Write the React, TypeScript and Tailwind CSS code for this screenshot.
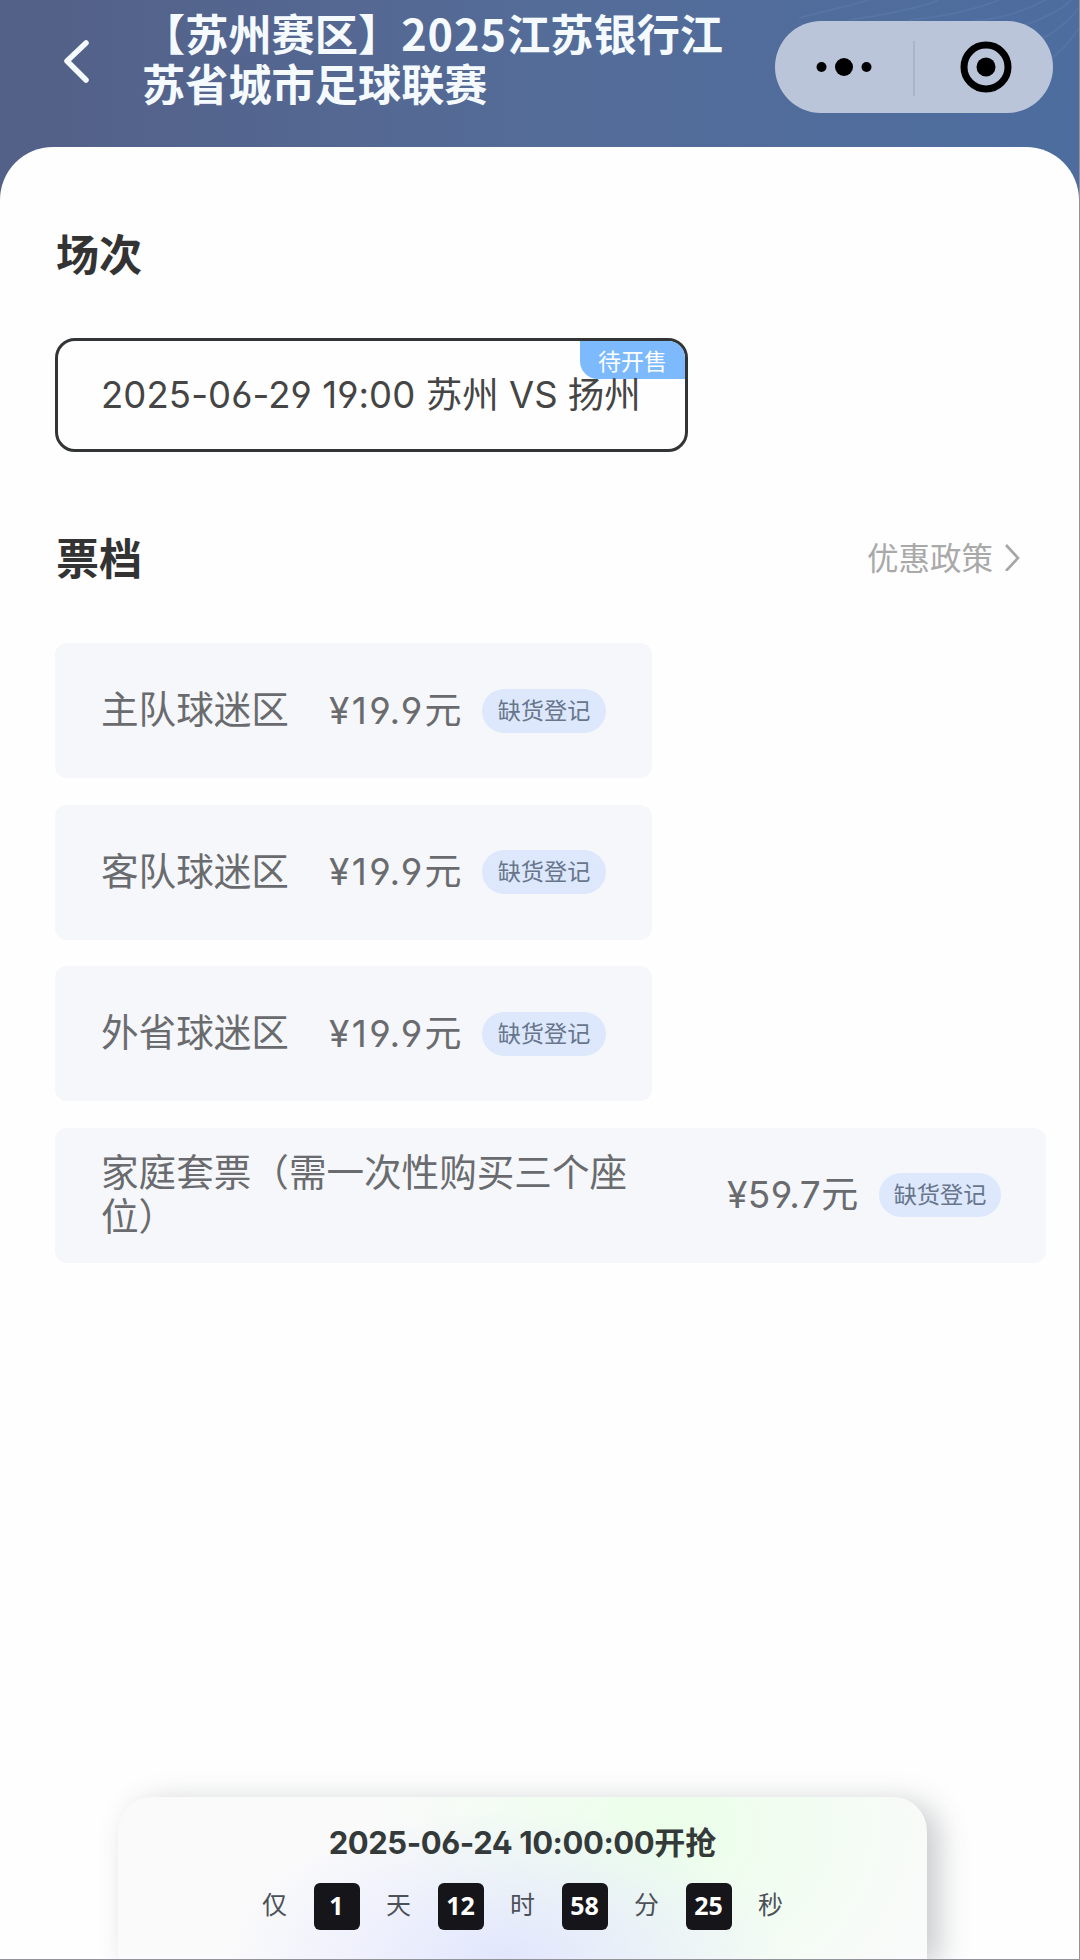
import React, { useState } from 'react';

interface Ticket {
  id: number;
  name: string;
  price: string;
  wide?: boolean;
}

const tickets: Ticket[] = [
  { id: 1, name: '主队球迷区', price: '19.9' },
  { id: 2, name: '客队球迷区', price: '19.9' },
  { id: 3, name: '外省球迷区', price: '19.9' },
  { id: 4, name: '家庭套票（需一次性购买三个座位）', price: '59.7', wide: true },
];

const countdown = [
  { value: '1', unit: '天' },
  { value: '12', unit: '时' },
  { value: '58', unit: '分' },
  { value: '25', unit: '秒' },
];

const Header = () => (
  <header className="relative flex h-[200px] items-start bg-linear-to-r from-[#536087] via-[#546c98] to-[#4d6d9f]">
    {/* decorative ripples */}
    <svg className="absolute top-0 right-0" width="280" height="110" viewBox="0 0 280 110" fill="none" stroke="#6d8fbd" strokeOpacity="0.22" strokeWidth="2">
      <path d="M0 18C30 10 50 6 70 0M50 20C90 14 120 8 140 0M110 20C150 16 180 8 200 0M170 22C210 18 232 8 246 0M214 28C240 22 262 10 272 0M236 42C256 34 270 20 280 8M248 62C262 52 272 40 280 28" />
    </svg>
    <svg className="mt-[37px] ml-[61px] shrink-0" width="30" height="46" viewBox="0 0 30 46" fill="none" stroke="#f5faff" strokeWidth="5.5" strokeLinecap="round" strokeLinejoin="round">
      <path d="M25 6L6 24L25 43" />
    </svg>
    <h1 className="mt-[7px] ml-[51px] w-[600px] text-[43.2px] leading-[50px] font-bold text-[#f5faff]">
      【苏州赛区】<span className="tracking-[1px]">2025</span>江苏银行江
      <br />
      苏省城市足球联赛
    </h1>
    <div className="relative mt-[21px] ml-[33px] flex h-[92px] w-[278px] shrink-0 items-center rounded-full bg-[#bbc5da]">
      <svg width="278" height="92" viewBox="0 0 278 92">
        <circle cx="46.5" cy="46" r="5" />
        <circle cx="69" cy="46" r="9" />
        <circle cx="91.5" cy="46" r="5" />
        <path d="M139 20V75" stroke="#a5aec4" strokeWidth="1.5" />
        <circle cx="211" cy="46" r="22" fill="none" stroke="#000" strokeWidth="7" />
        <circle cx="211" cy="46" r="9.5" />
      </svg>
    </div>
  </header>
);

const TicketCard = ({ ticket }: { ticket: Ticket }) => (
  <div
    className={`flex h-[135px] items-center rounded-xl bg-[#f5f7fb] pr-[45px] pl-[46px] ${
      ticket.wide ? 'w-[991px] justify-between' : 'w-[597px]'
    }`}
  >
    <div className={`pb-[7px] text-[37.6px] leading-[44px] text-[#6a6b6e] ${ticket.wide ? 'w-[540px]' : 'w-[228px]'}`}>
      {ticket.name}
    </div>
    <div className="flex items-center">
      <div className={`pb-[3px] text-[37px] leading-[45px] whitespace-nowrap text-[#6a6b6e] ${ticket.wide ? 'w-[152px]' : 'w-[153px]'}`}>
        <span
          className={`font-['Inter',sans-serif] [font-feature-settings:'ss01'] ${
            ticket.wide ? 'tracking-[0.5px]' : 'tracking-[2.4px]'
          }`}
        >
          ¥{ticket.price}
        </span>
        元
      </div>
      <div
        className={`flex h-[44px] items-center justify-center rounded-full bg-[#dde8fc] pb-[3px] text-[23.2px] text-[#67768c] ${
          ticket.wide ? 'w-[122px]' : 'w-[124px]'
        }`}
      >
        缺货登记
      </div>
    </div>
  </div>
);

const App = () => {
  const [selected, setSelected] = useState(true);

  return (
    <div className="flex h-[1960px] w-[1080px] flex-col overflow-hidden border-r border-b border-[#929499] bg-[#fefefe] font-['Noto_Sans_CJK_SC',sans-serif]">
      <Header />

      <main className="relative -mt-[53px] flex grow flex-col rounded-t-[53px] bg-[#fefefe] pl-[55px]">
        <h2 className="mt-[75px] pl-px text-[43px] leading-[60px] font-bold text-[#333]">场次</h2>

        <button
          onClick={() => setSelected(!selected)}
          className="relative mt-[56px] flex h-[114px] w-[633px] items-center overflow-hidden rounded-[20px] border-3 border-[#333436] pl-[43px] text-[36.5px] whitespace-nowrap text-[#454545]"
        >
          <span className="absolute top-0 right-0 flex h-[38px] w-[105px] items-center justify-center rounded-bl-[18px] bg-[#7cb9fd] text-[23px] text-white">
            待开售
          </span>
          <span className="relative -top-px">
            <span className="font-['Inter',sans-serif] tracking-[0.1px] [font-feature-settings:'ss01']">2025-06-29 19:00 </span>
            苏州
            <span className="font-['Inter',sans-serif]"> VS </span>
            扬州
          </span>
        </button>

        <div className="mt-[74px] flex items-center justify-between pr-[54px]">
          <h2 className="pl-px text-[43px] leading-[60px] font-bold text-[#333]">票档</h2>
          <a className="flex items-center text-[31.5px] leading-[40px] text-[#a9a9a9]">
            优惠政策
            <svg className="ml-[8px]" width="24" height="30" viewBox="0 0 24 30" fill="none" stroke="#a6a6a6" strokeWidth="2.6">
              <path d="M5 4L17 17L5 30" />
            </svg>
          </a>
        </div>

        <div className="mt-[57px] flex flex-col gap-[26.5px]">
          {tickets.map((ticket) => (
            <TicketCard key={ticket.id} ticket={ticket} />
          ))}
        </div>

        {/* countdown bar */}
        <div className="mt-auto ml-[63px] flex h-[162px] w-[809px] flex-col items-center rounded-t-[34px] bg-[radial-gradient(ellipse_280px_150px_at_48%_100%,#e2e6fd,transparent),radial-gradient(ellipse_300px_240px_at_68%_20%,#ebffe9,transparent)] bg-[#fafafb] shadow-[12px_6px_30px_rgba(60,70,75,0.28)]">
          <div className="mt-[21px] text-[31px] leading-[45px] font-bold text-[#343a3a]">
            <span className="font-['Inter',sans-serif] tracking-[-0.45px] [font-feature-settings:'ss01']">2025-06-24 10:00:00</span>开抢
          </div>
          <div className="mt-[18px] flex text-[25px] leading-[46px] text-[#4c5158]">
            <span className="-mt-[3px] w-[62px] text-center">仅</span>
            {countdown.map((item) => (
              <React.Fragment key={item.unit}>
                <span className="mx-[8px] h-[47px] w-[46px] rounded-[6px] bg-[#16161a] text-center font-['Noto_Sans',sans-serif] leading-[44px] font-bold text-white">
                  {item.value}
                </span>
                <span className="-mt-[3px] w-[62px] text-center">{item.unit}</span>
              </React.Fragment>
            ))}
          </div>
        </div>
      </main>
    </div>
  );
};

export default App;
